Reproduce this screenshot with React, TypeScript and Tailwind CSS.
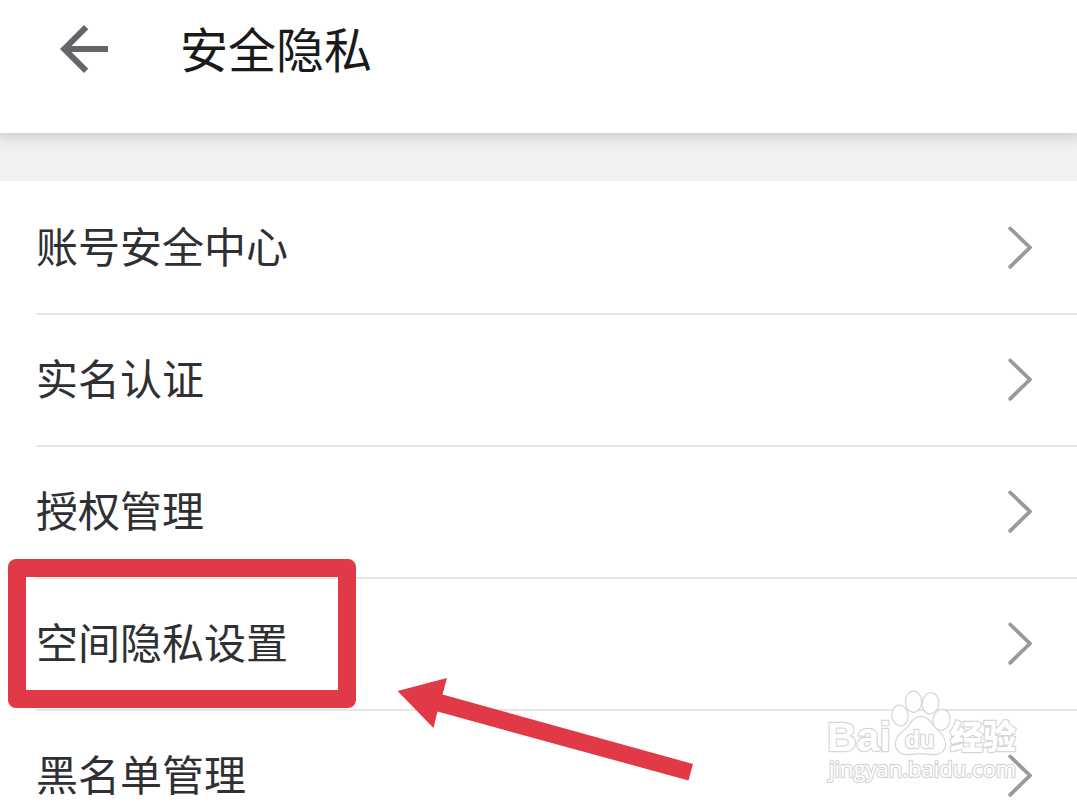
import type { ReactNode } from 'react';

interface SettingItem {
  id: string;
  label: string;
  overlay?: ReactNode;
}

const ArrowBackIcon = () => (
  <svg viewBox="4 4 16 16" className="size-12 fill-[#636569]" aria-hidden="true">
    <path d="M20 11H7.83l5.59-5.59L12 4l-8 8 8 8 1.41-1.41L7.83 13H20v-2z" />
  </svg>
);

const ChevronIcon = () => (
  <svg
    viewBox="0 0 24 44"
    className="relative z-10 h-11 w-6 shrink-0 fill-none stroke-[#999999]"
    strokeWidth="3.8"
    strokeLinecap="round"
    strokeLinejoin="round"
    aria-hidden="true"
  >
    <path d="M2.2 2.5 22 21.5 2.2 40.8" />
  </svg>
);

// Red frame around the row and the arrow that points at it
const Highlight = () => (
  <>
    <div className="pointer-events-none absolute -top-5 -left-7 h-[149px] w-[348px] rounded-lg border-[18px] border-[#e13a46]" />
    <svg
      viewBox="0 0 300 110"
      className="pointer-events-none absolute top-24 left-[360px] z-10 h-[110px] w-[300px] fill-[#e13a46]"
      aria-hidden="true"
    >
      <path d="M1.5 16 51 3 46.5 19.5 297 89 292.5 105.5 41.5 36.5 37.5 53Z" />
    </svg>
  </>
);

const Watermark = () => (
  <svg
    viewBox="0 0 205 100"
    className="pointer-events-none absolute -top-6 right-[50px] h-[100px] w-[205px] fill-white stroke-[#d6d6d6] [paint-order:stroke]"
    strokeWidth="2.4"
    strokeLinejoin="round"
  >
    <text x="5" y="64" className="font-['Liberation_Sans',sans-serif] text-[41px] font-bold">Bai</text>
    <ellipse cx="78" cy="28.5" rx="7.5" ry="9.8" transform="rotate(-8 78 28.5)" />
    <ellipse cx="91.5" cy="14.8" rx="7.5" ry="10" />
    <ellipse cx="108.5" cy="16.3" rx="7.8" ry="10" transform="rotate(8 108.5 16.3)" />
    <ellipse cx="119.5" cy="32.8" rx="8" ry="9.8" transform="rotate(12 119.5 32.8)" />
    <path d="M99 30c-6 0-9 5-12 9-4 5-13 9-13 18 0 6 5 10 11 10 5 0 9-1 14-1s9 1 14 1c6 0 10-4 10-10 0-9-8-13-12-18-3-4-6-9-12-9Z" />
    <text x="83" y="61" className="font-['Liberation_Sans',sans-serif] text-2xl font-bold">du</text>
    <text x="128" y="62" className="font-['Noto_Sans_CJK_SC',sans-serif] text-[33px] font-black">经验</text>
    <text x="7" y="90" className="font-['Open_Sans',sans-serif] text-[22px]">jingyan.baidu.com</text>
  </svg>
);

const items: SettingItem[] = [
  { id: 'account', label: '账号安全中心' },
  { id: 'realname', label: '实名认证' },
  { id: 'auth', label: '授权管理' },
  { id: 'space', label: '空间隐私设置', overlay: <Highlight /> },
  { id: 'blacklist', label: '黑名单管理', overlay: <Watermark /> },
];

const SettingRow = ({ item }: { item: SettingItem }) => (
  <li className="relative ml-9 border-b-2 border-[#e6e6e6]">
    <a href={`#${item.id}`} className="flex h-[130px] items-center justify-between pr-[45px]">
      <span className="pb-1.5 text-[42px] leading-[60px] text-[#2f3033]">{item.label}</span>
      <ChevronIcon />
    </a>
    {item.overlay}
  </li>
);

export default function App() {
  return (
    <div className="flex h-screen flex-col overflow-hidden bg-white font-['Noto_Sans_CJK_SC',sans-serif]">
      <header className="relative z-10 flex shrink-0 items-center gap-[72px] bg-white px-[60px] pt-[13px] pb-12 shadow-[0_0_14px_4px_rgba(0,0,0,0.16)]">
        <button type="button" aria-label="返回">
          <ArrowBackIcon />
        </button>
        <h1 className="pb-1 text-5xl leading-[68px] text-[#1a1a1a]">安全隐私</h1>
      </header>
      <main>
        <div className="h-12 bg-[#f0f1f3]" />
        <ul className="pt-0.5">
          {items.map((item) => (
            <SettingRow key={item.id} item={item} />
          ))}
        </ul>
      </main>
    </div>
  );
}
